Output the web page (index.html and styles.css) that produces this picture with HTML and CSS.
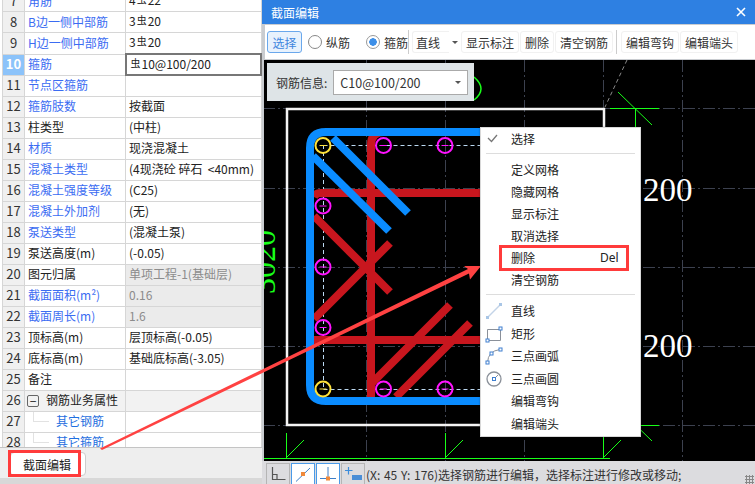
FILE: index.html
```html
<!DOCTYPE html>
<html lang="zh-CN">
<head>
    <meta charset="UTF-8">
    <title>截面编辑</title>
    <link rel="stylesheet" href="styles.css">
</head>
<body>
    <div class="page">
        <div class="left-panel">
            <div class="table-wrap">
                <table class="prop-table">
                    <tr><td class="num">7</td><td class="name blue">角筋</td><td class="val">4<span class="bar">虫</span>22</td></tr>
                    <tr><td class="num">8</td><td class="name blue">B边一侧中部筋</td><td class="val">3<span class="bar">虫</span>20</td></tr>
                    <tr><td class="num">9</td><td class="name blue">H边一侧中部筋</td><td class="val">3<span class="bar">虫</span>20</td></tr>
                    <tr><td class="num active">10</td><td class="name blue">箍筋</td><td class="val editing"><span class="bar">虫</span>10@100/200</td></tr>
                    <tr><td class="num">11</td><td class="name blue">节点区箍筋</td><td class="val"></td></tr>
                    <tr><td class="num">12</td><td class="name blue">箍筋肢数</td><td class="val">按截面</td></tr>
                    <tr><td class="num">13</td><td class="name">柱类型</td><td class="val">(中柱)</td></tr>
                    <tr><td class="num">14</td><td class="name blue">材质</td><td class="val">现浇混凝土</td></tr>
                    <tr><td class="num">15</td><td class="name blue">混凝土类型</td><td class="val">(4现浇砼 碎石 &nbsp;&lt;40mm)</td></tr>
                    <tr><td class="num">16</td><td class="name blue">混凝土强度等级</td><td class="val">(C25)</td></tr>
                    <tr><td class="num">17</td><td class="name blue">混凝土外加剂</td><td class="val">(无)</td></tr>
                    <tr><td class="num">18</td><td class="name blue">泵送类型</td><td class="val">(混凝土泵)</td></tr>
                    <tr><td class="num">19</td><td class="name">泵送高度(m)</td><td class="val">(-0.05)</td></tr>
                    <tr><td class="num">20</td><td class="name">图元归属</td><td class="val locked">单项工程-1(基础层)</td></tr>
                    <tr><td class="num">21</td><td class="name blue">截面面积(m²)</td><td class="val locked">0.16</td></tr>
                    <tr><td class="num">22</td><td class="name blue">截面周长(m)</td><td class="val locked">1.6</td></tr>
                    <tr><td class="num">23</td><td class="name">顶标高(m)</td><td class="val">层顶标高(-0.05)</td></tr>
                    <tr><td class="num">24</td><td class="name">底标高(m)</td><td class="val">基础底标高(-3.05)</td></tr>
                    <tr><td class="num">25</td><td class="name">备注</td><td class="val"></td></tr>
                    <tr class="group"><td class="num">26</td><td class="name"><span class="minus">−</span>钢筋业务属性</td><td class="val"></td></tr>
                    <tr><td class="num">27</td><td class="name child blue2">其它钢筋</td><td class="val"></td></tr>
                    <tr><td class="num">28</td><td class="name child blue2">其它箍筋</td><td class="val"></td></tr>
                </table>
            </div>
            <div class="tab-bar">
                <button class="tab-btn">截面编辑</button>
            </div>
        </div>

        <div class="editor">
            <div class="title-bar">
                <span>截面编辑</span>
                <svg class="close-icon" width="10" height="10" viewBox="0 0 10 10"><path d="M1 1L9 9M9 1L1 9" stroke="#fff" stroke-width="1.6"/></svg>
            </div>
            <div class="toolbar">
                <button class="tool-btn selected">选择</button>
                <span class="radio"><i class="dot"></i>纵筋</span>
                <span class="radio on"><i class="dot"></i>箍筋</span>
                <span class="tool-sep"></span>
                <span class="line-select">直线</span>
                <span class="small-arrow"></span>
                <button class="tool-btn">显示标注</button>
                <button class="tool-btn">删除</button>
                <button class="tool-btn">清空钢筋</button>
                <span class="tool-sep"></span>
                <button class="tool-btn">编辑弯钩</button>
                <button class="tool-btn">编辑端头</button>
            </div>
            <div class="canvas">
                <svg class="drawing" width="491" height="401" viewBox="264 59 491 401">
                    <g class="grid">
                        <path d="M366.500 59V460M445.500 59V460M524.500 59V460M603.500 59V107M682.500 59V460"/>
                        <path d="M263 107.500H755M263 187.500H755M263 266.500H755M263 345.500H755M263 424.500H755"/>
                    </g>
                    <path d="M627 59L605 106" stroke="#8a8a8a" stroke-dasharray="4 3" fill="none"/>
                    <rect x="287" y="108" width="317" height="316" fill="none" stroke="#f4f4f4" stroke-width="2.500"/>

                    <g fill="none" stroke="#18ff18">
                        <path d="M610 107.500H659M635.500 107V130M618 91L652 124"/>
                        <path d="M603 424.500H659M618 407L652 440"/>
                        <path d="M263 457.500H610M286.500 432V458M445.500 432V458M603.500 424V458"/>
                        <path d="M286 457L304 439M445 457L463 439M603 457L621 439"/>
                        <path d="M474 76Q488 88 474 99" stroke-width="1.500"/>
                    </g>
                    <text class="green-text" transform="translate(274.500 293) rotate(-90)">3020</text>

                    <path d="M323.500 144.500H480M323.500 388.500H480M323.500 144V388" fill="none" stroke="#bcd9f2" stroke-dasharray="4 3"/>

                    <g fill="none" stroke="#c8161e" stroke-width="8">
                        <path d="M371 396V144Q371 131 384 131"/>
                        <path d="M480 192H320Q316 192 314 196"/>
                        <path d="M480 339H314"/>
                        <path d="M314 215L390 291"/>
                        <path d="M390 242L314 318"/>
                        <path d="M450 304L371 383"/>
                        <path d="M470 322L396 396"/>
                    </g>
                    <g fill="none" stroke="#0a8cff" stroke-width="8">
                        <path d="M480 131H326Q310 131 310 147V384Q310 400 326 400H480"/>
                        <path d="M333 137L408 212"/>
                        <path d="M313 155L389 230"/>
                    </g>

                    <g fill="none" stroke="#ff12ff" stroke-width="2">
                        <circle cx="383.500" cy="144.500" r="7.500"/>
                        <circle cx="445" cy="144.500" r="7.500"/>
                        <circle cx="323" cy="205" r="7.500"/>
                        <circle cx="323" cy="266" r="7.500"/>
                        <circle cx="323" cy="326.500" r="7.500"/>
                        <circle cx="383.500" cy="388" r="7.500"/>
                        <circle cx="445" cy="388" r="7.500"/>
                        <path d="M380 144.500h7M380 388h7M441.500 144.500h7M441.500 388h7M319.500 205h7M319.500 266h7M319.500 326.500h7" stroke-width="1"/>
                    </g>
                    <g fill="none" stroke="#ffe23a" stroke-width="2">
                        <circle cx="323" cy="144.500" r="7.500"/>
                        <circle cx="323" cy="388" r="7.500"/>
                        <path d="M319.500 144.500h7M319.500 388h7" stroke-width="1"/>
                    </g>

                    <text class="dim-text" x="643" y="200">200</text>
                    <text class="dim-text" x="643" y="356">200</text>
                </svg>

                <div class="rebar-info">
                    <label>钢筋信息:</label>
                    <div class="info-select">C10@100/200<span class="small-arrow"></span></div>
                </div>
            </div>
            <div class="status-bar">
                <span class="st-btn">
                    <svg width="16" height="16" viewBox="0 0 16 16"><path d="M2.500 1V13.500H15.500M2.500 8.500H7V13.500" fill="none" stroke="#555" stroke-width="1.200"/></svg>
                </span>
                <span class="st-btn on">
                    <svg width="18" height="16" viewBox="0 0 18 16"><path d="M2 15.500L16 2" stroke="#3d7fc8" fill="none"/><rect x="7" y="6" width="4" height="4" fill="#f08a3c"/></svg>
                </span>
                <span class="st-btn on">
                    <svg width="18" height="16" viewBox="0 0 18 16"><path d="M9 1V12M1 12.500H17" stroke="#3d7fc8" fill="none"/><rect x="7" y="10.500" width="4" height="4" fill="#f08a3c"/></svg>
                </span>
                <span class="st-btn">
                    <svg width="20" height="16" viewBox="0 0 20 16"><path d="M5.500 1V8.500M2 4.500H9.500" stroke="#3d8ddb" fill="none" stroke-width="1.200"/><rect x="9" y="9" width="10" height="5" fill="#4a8ed6"/></svg>
                </span>
                <span class="status-text">(X: 45 Y: 176)选择钢筋进行编辑，选择标注进行修改或移动;</span>
                <span class="grip"></span>
            </div>
        </div>

        <svg class="arrow-layer" width="755" height="484" viewBox="0 0 755 484">
            <path d="M100 448.500L468 269L464 266L481 266L470 279.500L469 273.500L102 450Z" fill="#ff4242"/>
        </svg>
        <div class="tab-mark"></div>

        <div class="context-menu">
            <div class="menu-item"><svg class="menu-icon" width="16" height="16" viewBox="0 0 16 16"><path d="M3 8L6.500 11.500L12 5" fill="none" stroke="#777" stroke-width="1.300"/></svg>选择</div>
            <div class="menu-sep"></div>
            <div class="menu-item">定义网格</div>
            <div class="menu-item">隐藏网格</div>
            <div class="menu-item">显示标注</div>
            <div class="menu-item">取消选择</div>
            <div class="menu-item marked">删除<span class="shortcut">Del</span></div>
            <div class="menu-item">清空钢筋</div>
            <div class="menu-sep"></div>
            <div class="menu-item tall"><svg class="menu-icon" width="18" height="18" viewBox="0 0 18 18"><path d="M2.500 15.500L15.500 2.500" stroke="#c3d4e8" fill="none" stroke-width="1.500"/><rect x="1" y="14" width="3" height="3" fill="#a9c6e6"/><rect x="14" y="1" width="3" height="3" fill="#a9c6e6"/></svg>直线</div>
            <div class="menu-item tall"><svg class="menu-icon" width="18" height="18" viewBox="0 0 18 18"><path d="M2.500 4.500H15.500V15.500H2.500Z" fill="none" stroke="#8a9099"/><rect x="14" y="2" width="3" height="3" fill="#fff" stroke="#3f7fd0"/><rect x="1" y="14" width="3" height="3" fill="#fff" stroke="#3f7fd0"/></svg>矩形</div>
            <div class="menu-item tall"><svg class="menu-icon" width="18" height="18" viewBox="0 0 18 18"><path d="M2.500 15.500Q3 4 15 2.500" fill="none" stroke="#8a9099"/><rect x="14" y="1" width="3" height="3" fill="#fff" stroke="#3f7fd0"/><rect x="5" y="5" width="3" height="3" fill="#fff" stroke="#3f7fd0"/><rect x="1" y="14" width="3" height="3" fill="#fff" stroke="#3f7fd0"/></svg>三点画弧</div>
            <div class="menu-item tall"><svg class="menu-icon" width="18" height="18" viewBox="0 0 18 18"><circle cx="9" cy="9" r="7" fill="none" stroke="#8a9099" stroke-width="1.300"/><path d="M9 9L13 5" stroke="#8a9099"/><rect x="7.500" y="7.500" width="3" height="3" fill="#fff" stroke="#3f7fd0"/></svg>三点画圆</div>
            <div class="menu-item tall">编辑弯钩</div>
            <div class="menu-item tall">编辑端头</div>
        </div>
    </div>
</body>
</html>
```

FILE: styles.css
```css
*, *::after { box-sizing: border-box; }
html, body { margin: 0; padding: 0; }
body {
    font-family: "Noto Sans CJK SC", "Noto Sans", sans-serif;
    font-size: 12px;
    color: #222;
    background: #fff;
}
.page {
    position: relative;
    display: flex;
    width: 755px;
    height: 484px;
    overflow: hidden;
}

/* left property table */
.left-panel {
    width: 262px;
    flex: none;
    display: flex;
    flex-direction: column;
    background: #d8d8d8;
}
.table-wrap {
    height: 448px;
    flex: none;
    overflow: hidden;
    background: #fff;
    padding-left: 2px;
    border-bottom: 1px solid #c4c4c4;
}
.prop-table {
    width: 260px;
    margin-top: -10px;
    border-collapse: collapse;
    table-layout: fixed;
}
.prop-table td {
    height: 21px;
    padding: 0 0 2px;
    border: 1px solid #d6d6d6;
    white-space: nowrap;
    overflow: hidden;
    line-height: 17px;
}
.num {
    width: 22px;
    text-align: center;
    background: #f0f0f0;
    color: #333;
    font-size: 13px;
}
.num.active { background: #8cc3fa; color: #fff; font-weight: bold; }
.prop-table .name { width: 101px; padding-left: 3px; }
.prop-table .val { padding-left: 3px; }
.blue { color: #3b6cf2; }
.blue2 { color: #1f6fe0; }
.prop-table .child {
    padding-left: 31px;
    background:
        linear-gradient(#e2e2e2, #e2e2e2) 8px 50% / 16px 1px no-repeat,
        linear-gradient(#e2e2e2, #e2e2e2) 8px 0 / 1px 50% no-repeat;
}
.prop-table .val.locked { background: #ebebeb; color: #8c8c8c; }
.group td { background: #f2f2f2; }
.group .num { background: #f0f0f0; }
.prop-table .group .name { padding-left: 2px; }
.prop-table .val.editing { border: 2px solid #777; background: #fff; line-height: 15px; }
.bar { font-size: 10px; position: relative; top: -2px; margin: 0 1px; }
.minus {
    display: inline-block;
    width: 12px;
    height: 12px;
    margin: 0 7px 0 0;
    border: 1px solid #666;
    border-radius: 2px;
    line-height: 9px;
    text-align: center;
    vertical-align: -1px;
}
.tab-bar {
    height: 30px;
    flex: none;
    padding: 4px 0 0 10px;
    background: #eee;
}
.tab-btn {
    width: 76px;
    height: 24px;
    background: #fff;
    border: 1px solid #ccc;
    border-radius: 4px;
    font: inherit;
    color: #222;
    text-align: left;
    padding: 0 0 0 12px;
}
.tab-mark {
    position: absolute;
    left: 8px;
    top: 450px;
    width: 73px;
    height: 27px;
    border: 3px solid #ff3b3b;
}

/* editor window */
.editor {
    flex: 1;
    display: flex;
    flex-direction: column;
    background: #c9ccd0;
}
.title-bar {
    height: 24px;
    flex: none;
    display: flex;
    align-items: center;
    justify-content: space-between;
    padding: 0 9px 0 9px;
    background: #2e80e2;
    color: #fff;
}
.toolbar {
    height: 34px;
    flex: none;
    display: flex;
    align-items: center;
    margin: 1px 0 0 3px;
    padding-left: 2px;
    background: #fff;
}
.tool-btn {
    height: 22px;
    padding: 0 4px;
    margin-right: 1px;
    background: #fff;
    border: 1px solid #f1f1f1;
    border-radius: 3px;
    font: inherit;
    color: #333;
}
.tool-btn.selected {
    width: 35px;
    margin-right: 6px;
    background: #e8f2fd;
    border-color: #6aa8ec;
    color: #3f86de;
}
.radio { display: flex; align-items: center; width: 58px; color: #333; }
.radio.on { width: 42px; }
.dot {
    width: 14px;
    height: 14px;
    margin-right: 4px;
    border: 1px solid #888;
    border-radius: 50%;
    background: #fff;
}
.radio.on .dot {
    border-color: #999;
    background: radial-gradient(circle, #3d8fe8 0 3.500px, #fff 4px);
}
.tool-sep { width: 1px; height: 24px; margin: 0 4px 0 2px; background: #ccc; }
.radio.on + .tool-sep { margin: 0 3px 0 0; }
.line-select {
    width: 37px;
    height: 22px;
    padding-left: 3px;
    line-height: 21px;
    border: 1px solid #f1f1f1;
    border-right: 0;
    border-radius: 3px 0 0 3px;
    color: #333;
}
.small-arrow {
    width: 0;
    height: 0;
    border-left: 3px solid transparent;
    border-right: 3px solid transparent;
    border-top: 3px solid #555;
}
.toolbar .small-arrow { margin: 0 3px; }

.canvas {
    position: relative;
    flex: 1;
    background: #000;
    margin: 1px 0 0 2px;
}
.drawing { display: block; }
.grid path { stroke: #3c414f; fill: none; stroke-dasharray: 12 3 2 3; }
.green-text { fill: #18ff18; font-family: "Liberation Serif", serif; font-size: 32px; }
.dim-text { fill: #fff; font-family: "Liberation Serif", serif; font-size: 33px; }
.rebar-info {
    position: absolute;
    left: 3px;
    top: 3px;
    width: 207px;
    height: 38px;
    display: flex;
    align-items: center;
    padding-left: 9px;
    background: #dee4e7;
    color: #333;
}
.info-select {
    display: flex;
    align-items: center;
    justify-content: space-between;
    width: 135px;
    height: 25px;
    margin-left: 6px;
    padding: 0 6px;
    font-size: 12.500px;
    background: #fff;
    border: 1px solid #aaa;
}

.status-bar {
    height: 24px;
    flex: none;
    display: flex;
    align-items: flex-end;
    padding-left: 4px;
    background: #dcdcdf;
    position: relative;
}
.st-btn {
    width: 24px;
    height: 22px;
    margin-right: 1px;
    display: flex;
    align-items: center;
    justify-content: center;
    border: 1px solid #b5b5b5;
    background: #dcdcdf;
}
.st-btn.on { background: #fff; border-color: #4a9ae8; }
.status-text { margin: 0 0 2px; color: #333; white-space: nowrap; word-spacing: 1px; }
.grip {
    position: absolute;
    right: 1px;
    bottom: 1px;
    width: 9px;
    height: 9px;
    background: radial-gradient(circle, #888 1px, transparent 1.200px) 0 0 / 3px 3px;
}

/* overlays */
.arrow-layer { position: absolute; left: 0; top: 0; pointer-events: none; }
.context-menu {
    position: absolute;
    left: 480px;
    top: 127px;
    width: 161px;
    height: 310px;
    background: #fff;
    border: 1px solid #d8d8d8;
    box-shadow: 0 0 2px rgba(0, 0, 0, 0.3);
    color: #222;
}
.menu-item {
    position: relative;
    height: 22px;
    line-height: 22px;
    padding-left: 30px;
    white-space: nowrap;
}
.menu-item.tall { height: 22.600px; }
.menu-icon { position: absolute; left: 4px; top: 2px; }
.menu-sep { height: 1px; margin: 3px 5px 5px; background: #ddd; }
.shortcut { position: absolute; left: 119px; top: 0; font-family: "Noto Sans", sans-serif; }
.menu-item.marked::after {
    content: "";
    position: absolute;
    left: 18px;
    top: -2px;
    width: 130px;
    height: 26px;
    border: 3px solid #ff3b3b;
}
```
